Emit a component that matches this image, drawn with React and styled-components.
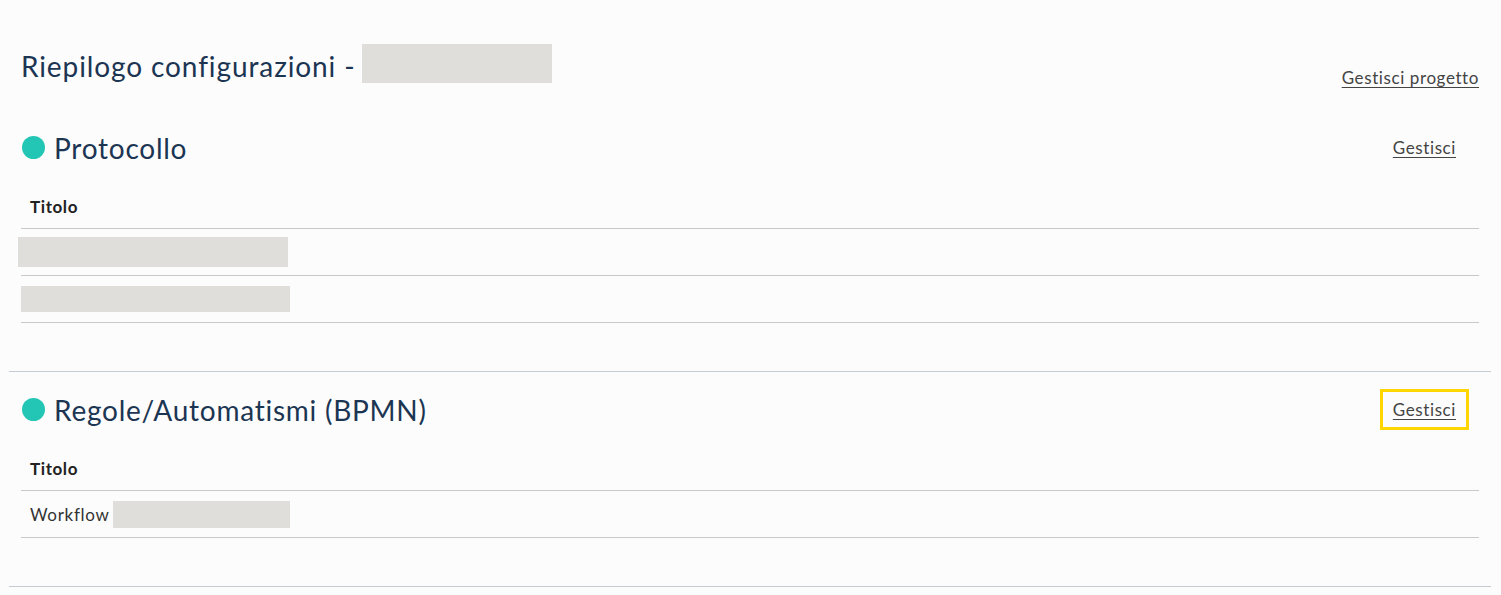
import React from 'react';
import styled, { createGlobalStyle } from 'styled-components';

const GlobalStyle = createGlobalStyle`
  html, body {
    margin: 0;
    padding: 0;
    background: #fcfcfc;
  }
  body {
    font-family: Lato, "Noto Sans", "Liberation Sans", sans-serif;
    color: #333;
  }
`;

const Page = styled.div`
  margin-left: 9px;
  width: 1482px;
`;

const Header = styled.header`
  display: flex;
  justify-content: space-between;
  align-items: flex-start;
  padding: 44px 12px 0;
  margin-bottom: 22px;
`;

const PageTitle = styled.h1`
  display: flex;
  align-items: flex-start;
  gap: 6px;
  margin: 0;
  font-size: 28px;
  font-weight: 400;
  line-height: 39px;
  letter-spacing: 0.9px;
  color: #1b3553;

  & > span:first-child {
    margin-top: 3px;
  }
`;

const Redacted = styled.span`
  display: inline-block;
  background: #dfdedb;
  width: ${props => props.w}px;
  height: ${props => props.h}px;
  margin-left: ${props => props.ml || 0}px;
  vertical-align: middle;
`;

const TextLink = styled.a`
  margin-top: 24px;
  font-size: 17px;
  line-height: 20px;
  letter-spacing: 0.6px;
  color: #444;
  text-decoration: underline;
  text-underline-offset: 3px;
  cursor: pointer;
`;

const Section = styled.section`
  padding: 17px 12px 48px;
  border-bottom: 1px solid #c5cad3;
`;

const SectionHead = styled.div`
  display: flex;
  justify-content: space-between;
  align-items: center;
  height: 41px;
`;

const SectionTitle = styled.h2`
  display: flex;
  align-items: center;
  gap: 9px;
  margin: 0 0 0 1px;
  font-size: 28px;
  font-weight: 400;
  letter-spacing: 0.75px;
  color: #1b3553;
`;

const Dot = styled.span`
  width: 23px;
  height: 23px;
  border-radius: 50%;
  background: #23c6b4;
  flex-shrink: 0;
`;

const ManageButton = styled.a`
  display: inline-block;
  padding: 8px 10px;
  margin-right: 10px;
  border: 3px solid ${props => (props.focused ? '#ffd600' : 'transparent')};
  font-size: 17px;
  line-height: 19px;
  letter-spacing: 0.6px;
  color: #444;
  text-decoration: underline;
  text-underline-offset: 3px;
  cursor: pointer;
`;

const Table = styled.div`
  margin-top: 16px;
`;

const HeadRow = styled.div`
  display: flex;
  align-items: center;
  height: 44px;
  padding-left: 9px;
  border-bottom: 1px solid #c9c9c9;
  font-size: 17px;
  font-weight: 700;
  letter-spacing: 0.6px;
  color: #222;
`;

const Row = styled.div`
  display: flex;
  align-items: center;
  height: 46px;
  padding-left: ${props => (props.flush ? 0 : 9)}px;
  border-bottom: 1px solid #c9c9c9;
  font-size: 17px;
  letter-spacing: 0.7px;
  color: #333;
`;

const sections = [
  {
    title: 'Protocollo',
    rows: [
      { flush: true, redacted: { w: 270, h: 30, ml: -3 } },
      { flush: true, redacted: { w: 269, h: 26 } }
    ]
  },
  {
    title: 'Regole/Automatismi (BPMN)',
    focused: true,
    rows: [{ text: 'Workflow', redacted: { w: 177, h: 27, ml: 3 } }]
  }
];

export default function App() {
  return (
    <>
      <GlobalStyle />
      <Page>
        <Header>
          <PageTitle>
            <span>Riepilogo configurazioni -</span>
            <Redacted w={190} h={39} />
          </PageTitle>
          <TextLink>Gestisci progetto</TextLink>
        </Header>

        {sections.map(section => (
          <Section key={section.title}>
            <SectionHead>
              <SectionTitle>
                <Dot />
                {section.title}
              </SectionTitle>
              <ManageButton focused={section.focused}>Gestisci</ManageButton>
            </SectionHead>
            <Table>
              <HeadRow>Titolo</HeadRow>
              {section.rows.map((row, i) => (
                <Row key={i} flush={row.flush}>
                  {row.text}
                  <Redacted {...row.redacted} />
                </Row>
              ))}
            </Table>
          </Section>
        ))}
      </Page>
    </>
  );
}
